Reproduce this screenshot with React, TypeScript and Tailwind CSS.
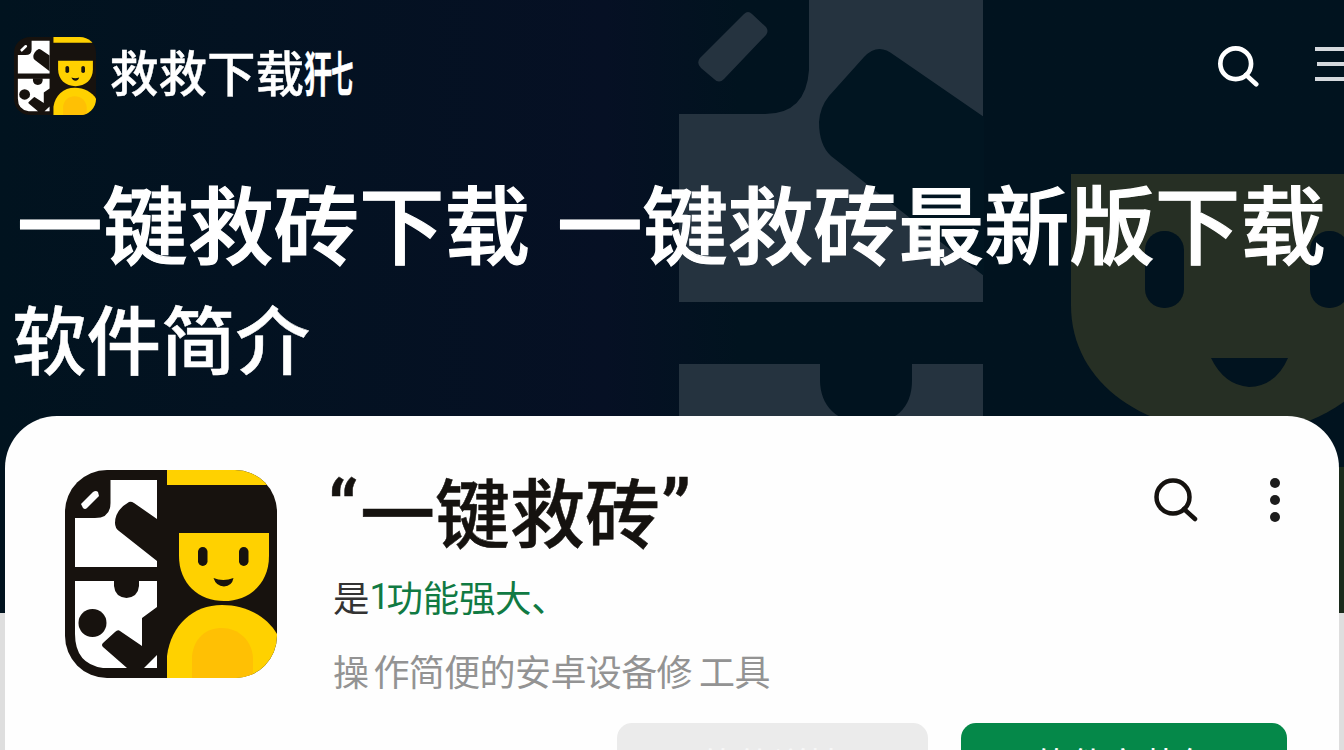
import { clsx } from 'clsx';

const CJK = "font-['Noto_Sans_CJK_SC',sans-serif]";

function AppLogo({ className }: { className?: string }) {
  return (
    <svg viewBox="0 0 212 208" preserveAspectRatio="none" className={className}>
      <clipPath id="logo-clip">
        <rect width="212" height="208" rx="42" />
      </clipPath>
      <g clipPath="url(#logo-clip)">
        <rect width="212" height="208" fill="#17120e" />
        {/* upper tile */}
        <path d="M45.500 10H92V97H10V48H30Q45.500 48 45.500 33Z" fill="#fff" />
        <path d="M64 32Q50 40 50 53Q50 58 54 61L92 91V49L69 33Q66 31 64 32Z" fill="#17120e" />
        <path d="M16 34L28 22Q31 20 33 22L34 26L22 38Q20 40 18 38Z" fill="#fff" />
        {/* lower tile */}
        <path d="M10 111H92V137L77 148V176L55 161Q53 159 50 162L38 173Q36 175 38 177L62 198H38Q10 194 10 164Z" fill="#fff" />
        <path d="M92 185V198H79Z" fill="#fff" />
        <path d="M49 110H74V116Q73 127 61.500 128Q50 127 49 116Z" fill="#17120e" />
        <circle cx="27.500" cy="153" r="14" fill="#17120e" />
        {/* character */}
        <path d="M102 0H212V15H102Z" fill="#ffd100" />
        <path d="M114 63H204V86C204 114 184 131 159 131S114 114 114 86Z" fill="#ffd100" />
        <rect x="133" y="77" width="9.500" height="19" rx="4.750" fill="#17120e" />
        <rect x="174" y="77" width="9.500" height="19" rx="4.750" fill="#17120e" />
        <path d="M148.500 108Q158 112 168.500 108Q167 116 159 116.500Q151 116 148.500 108Z" fill="#17120e" />
        <path d="M102 208V186C106 155 128 135 157 135C182 135 202 147 212 164V208Z" fill="#ffd100" />
        <path d="M127 208V186C129 168 141 158 157 158S187 170 188 188V208Z" fill="#ffc004" />
      </g>
    </svg>
  );
}

// Enlarged, dimmed logo that sits behind the hero
function HeroArtwork() {
  return (
    <svg viewBox="0 0 1344 613" className="absolute inset-0 h-full w-full">
      <g fill="#25333f">
        <path d="M809 0H983V302H679V114H765Q806 114 809 70Z" />
        <path d="M744 14Q748 10 752 14L766 27Q769 31 766 35L724 79Q719 84 714 79L701 68Q696 63 700 58Z" />
        <path d="M679 364H983V613H679Z" />
      </g>
      <path d="M864 57Q878 42 894 55L984 117V276L831 156Q819 145 819 122Q820 107 829 96Z" fill="#011521" />
      <path d="M820 362H912V380C912 409 895 423 866 423S820 406 820 380Z" fill="#01131f" />
      <path d="M1071 174H1411V270C1411 365 1335 434 1241 434S1071 385 1071 305Z" fill="#262f24" />
      <rect x="1145" y="231" width="39" height="77" rx="19" fill="#01131f" />
      <rect x="1310" y="231" width="39" height="77" rx="19" fill="#01131f" />
      <path d="M1211 358H1288Q1276 386 1249 387Q1224 385 1211 358Z" fill="#01131f" />
      <rect x="1338" y="467" width="6" height="146" fill="#1b2b1c" />
    </svg>
  );
}

function SearchIcon({ className, strokeWidth }: { className?: string; strokeWidth: number }) {
  return (
    <svg viewBox="0 0 44 44" fill="none" stroke="currentColor" strokeWidth={strokeWidth} className={className}>
      <circle cx="19" cy="19" r="16.500" />
      <path d="M30 31L41 41" strokeLinecap="round" />
    </svg>
  );
}

function Header() {
  return (
    <header className="flex h-[141px] items-start pl-[14px] pt-[37px]">
      <AppLogo className="h-[78px] w-[82px]" />
      <div className="ml-[14px] flex h-[68px] items-center whitespace-nowrap text-[48.500px] font-medium leading-[68px] [-webkit-text-stroke:0.4px_#fff]">
        救救下载
        <span className="flex w-[48px] font-bold">
          <span className="w-[27px] origin-left scale-x-[0.58]">犴</span>
          <span className="w-[21px] origin-left scale-x-[0.46]">七</span>
        </span>
      </div>
      <SearchIcon className="ml-auto mt-[9px] h-[41px] w-[41px]" strokeWidth={5} />
      <div className="ml-[56px] mt-[10px] flex w-[29px] shrink-0 flex-col gap-[11px]">
        <span className="h-[4px] w-full bg-[#d5d9de]" />
        <span className="ml-[2px] h-[4px] w-full bg-[#d5d9de]" />
        <span className="h-[4px] w-full bg-[#d5d9de]" />
      </div>
    </header>
  );
}

const ACTIONS = [
  { label: '软件详情', className: 'ml-[612px] w-[311px] bg-[#ebebeb] text-[#f7f7f7]' },
  { label: '软件安装包', className: 'ml-[33px] w-[326px] bg-[#058849] text-white' },
];

function AppCard() {
  return (
    <section className="ml-[5px] h-[334px] w-[1334px] overflow-hidden rounded-t-[52px] bg-[#fefefe] text-[#15120f]">
      <div className="flex h-[307px]">
        <AppLogo className="ml-[60px] mt-[54px] h-[208px] w-[212px]" />
        <div className="ml-[56px] w-[760px] whitespace-nowrap">
          <h3 className="mt-[41px] flex h-[106px] items-center text-[75px] font-medium leading-[106px] [-webkit-text-stroke:0.5px_#15120f]">
            <span className="-ml-[5px] w-[32px] font-[Roboto] text-[78px]">“</span>
            <span>一键救砖</span>
            <span className="ml-[1px] font-[Roboto] text-[78px]">”</span>
          </h3>
          <p className="mt-[8px] flex h-[52px] text-[36.500px] leading-[52px] text-[#333]">
            是
            <span className="flex text-[#107a43]">
              <span className="w-[17px] font-[Roboto] text-[36px] tracking-[-3px]">1</span>
              <span className="tracking-[-0.300px]">功能强大、</span>
            </span>
          </p>
          <p className="mt-[21px] h-[52px] text-[36px] leading-[52px] tracking-[-0.600px] text-[#939393]">
            操<span className="ml-[5px]">作简便的安卓设备修</span>
            <span className="ml-[7px]">工具</span>
          </p>
        </div>
        <SearchIcon className="ml-[61px] mt-[62px] h-[44px] w-[44px]" strokeWidth={4.5} />
        <div className="ml-[72px] mt-[62px] flex flex-col gap-[7px]">
          <span className="size-[10px] rounded-full bg-[#1c1c1c]" />
          <span className="size-[10px] rounded-full bg-[#1c1c1c]" />
          <span className="size-[10px] rounded-full bg-[#1c1c1c]" />
        </div>
      </div>
      <div className="flex">
        {ACTIONS.map((action) => (
          <button
            key={action.label}
            className={clsx('h-[80px] shrink-0 rounded-[15px] text-[36px] leading-[40px]', action.className)}
          >
            {action.label}
          </button>
        ))}
      </div>
    </section>
  );
}

export default function App() {
  return (
    <main className={clsx('relative h-[750px] w-[1344px] overflow-hidden bg-[#dedede]', CJK)}>
      <div className="absolute inset-x-0 top-0 h-[613px] bg-linear-to-r from-[#01131f] via-[#061024] via-45% to-[#01131f] to-55%">
        <HeroArtwork />
      </div>
      <div className="relative text-white">
        <Header />
        <div className="h-[275px] whitespace-nowrap">
          <h1 className="ml-[17px] flex h-[160px] items-center gap-[27px] text-[85.500px] font-medium leading-[160px] [-webkit-text-stroke:1.2px_#fff]">
            <span>一键救砖下载</span>
            <span className="tracking-[-0.100px]">一键救砖最新版下载</span>
          </h1>
          <h2 className="ml-[12px] mt-[-14px] text-[74.500px] font-medium leading-[100px] [-webkit-text-stroke:0.5px_#fff]">软件简介</h2>
        </div>
        <AppCard />
      </div>
    </main>
  );
}
